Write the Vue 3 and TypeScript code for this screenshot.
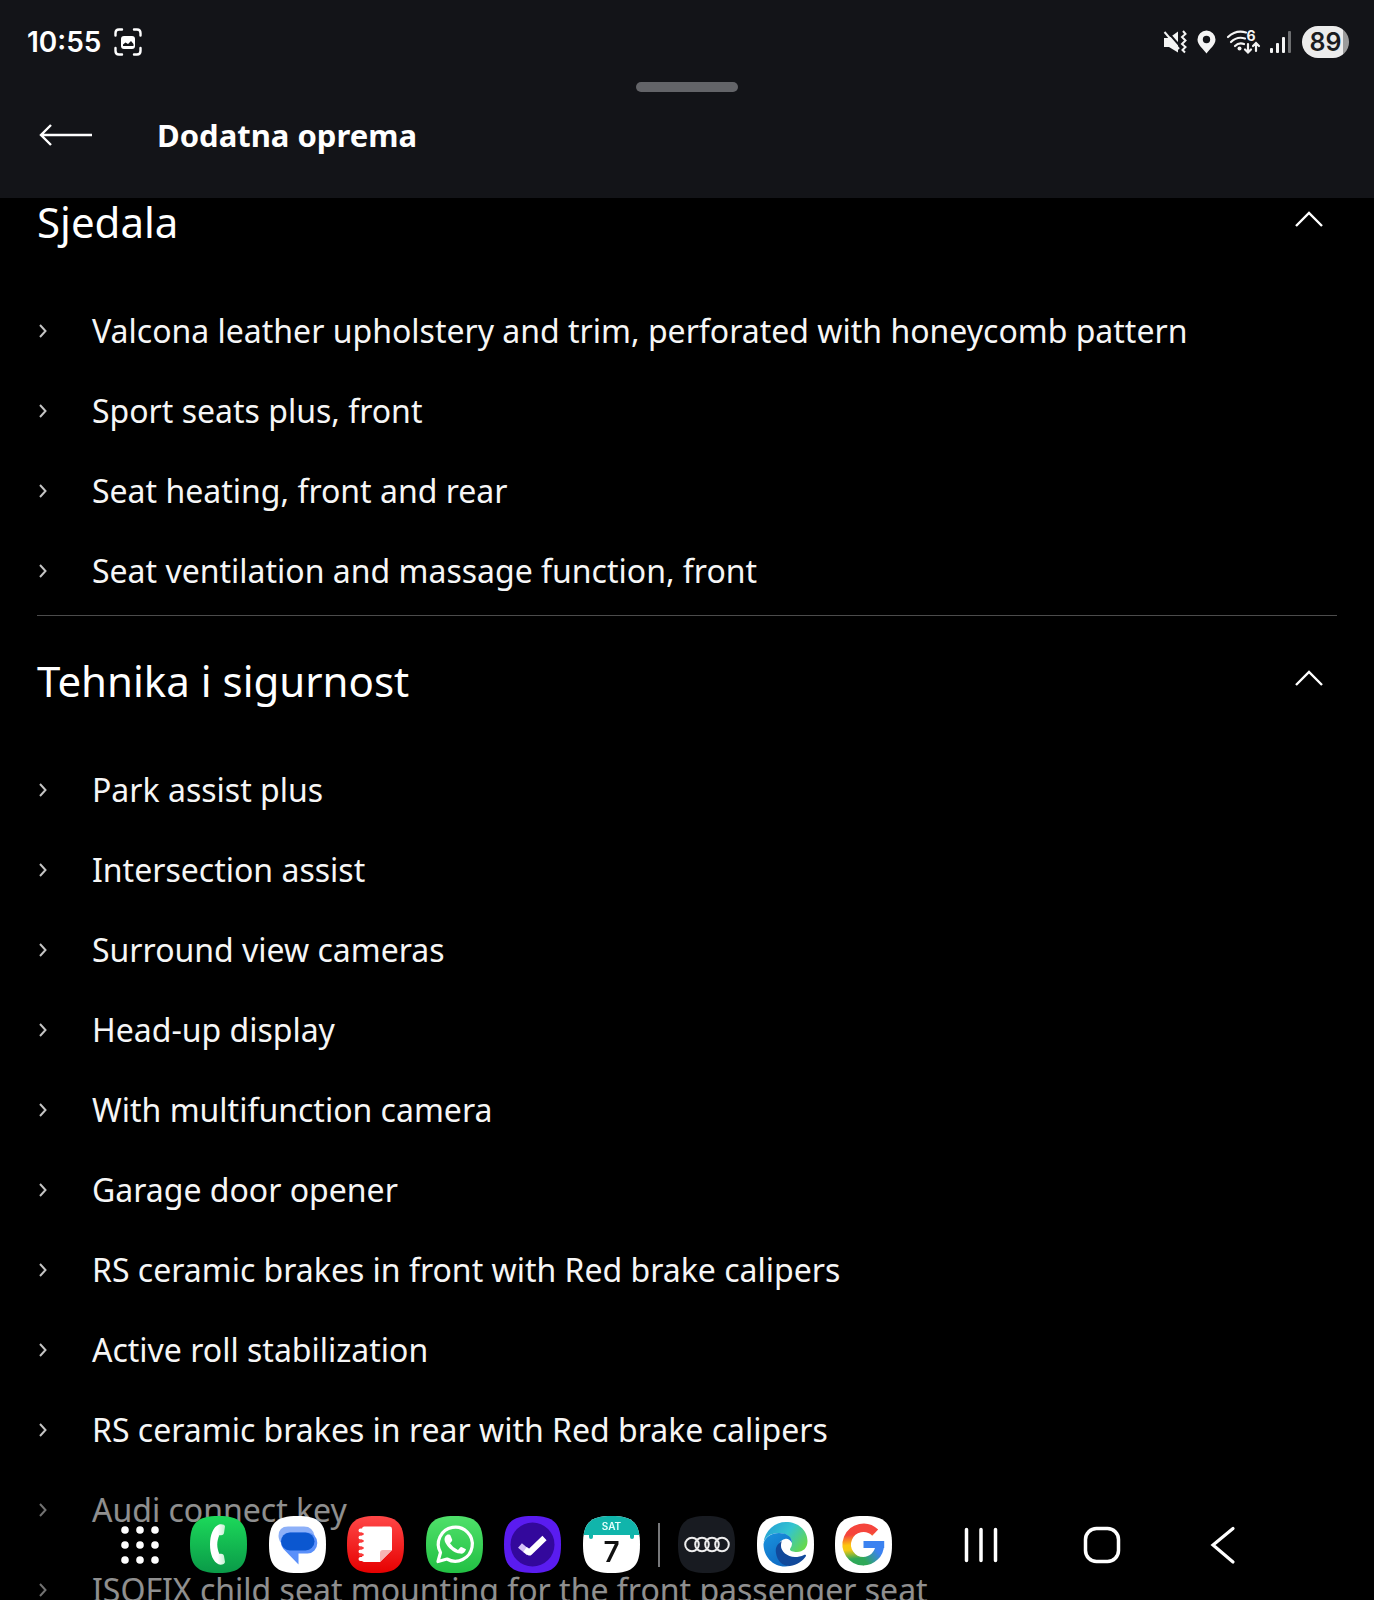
<script setup lang="ts">
import { ref } from 'vue'

interface Section {
  id: string
  title: string
  open: boolean
  items: string[]
}

const sections = ref<Section[]>([
  {
    id: 'sjedala',
    title: 'Sjedala',
    open: true,
    items: [
      'Valcona leather upholstery and trim, perforated with honeycomb pattern',
      'Sport seats plus, front',
      'Seat heating, front and rear',
      'Seat ventilation and massage function, front',
    ],
  },
  {
    id: 'tehnika',
    title: 'Tehnika i sigurnost',
    open: true,
    items: [
      'Park assist plus',
      'Intersection assist',
      'Surround view cameras',
      'Head-up display',
      'With multifunction camera',
      'Garage door opener',
      'RS ceramic brakes in front with Red brake calipers',
      'Active roll stabilization',
      'RS ceramic brakes in rear with Red brake calipers',
      'Audi connect key',
      'ISOFIX child seat mounting for the front passenger seat',
    ],
  },
])

const squircle = 'M28.5 0C50 0 57 7 57 28.5S50 57 28.5 57 0 50 0 28.5 7 0 28.5 0Z'
const dots = [4, 19, 34]
const rings = [14, 24, 34, 44]
</script>

<template>
  <div class="screen">
    <header class="top">
      <div class="status">
        <div class="status-group">
          <span class="clock">10:55</span>
          <svg class="shot" width="28" height="28" viewBox="0 0 28 28" aria-hidden="true">
            <g fill="none" stroke="#fff" stroke-width="2.4" stroke-linecap="round">
              <path d="M1.5 7.500V5Q1.500 1.500 5 1.500H8M20 1.500H23Q26.500 1.500 26.500 5V7.500M26.500 20V23Q26.500 26.500 23 26.500H20M8 26.500H5Q1.500 26.500 1.500 23V20" />
            </g>
            <rect x="7" y="8" width="14" height="13" rx="3" fill="#fff" />
            <path d="M9 18V16.500L11.500 14.500 14 16 17 13 19.500 16V18Z" fill="#131418" />
          </svg>
        </div>
        <div class="status-group icons">
          <svg width="24" height="24" viewBox="0 0 24 24" aria-hidden="true">
            <path d="M1 8H6L15 1.500V22.500L6 17H1Z" fill="#f4f4f4" />
            <path d="M2 -1L17 16" stroke="#131418" stroke-width="2" />
            <path d="M1.500 2L16 19" stroke="#f4f4f4" stroke-width="2" />
            <path d="M20 1L22.500 4 19 7 22.500 10.500 19 14 22.500 17 19.500 20 22 22.500" fill="none" stroke="#f4f4f4" stroke-width="2" />
          </svg>
          <svg width="19" height="24" viewBox="0 0 19 24" aria-hidden="true">
            <path fill-rule="evenodd" fill="#f4f4f4" d="M9.500 0.500A9 9 0 0 1 18.500 9.500C18.500 15 13 18.500 9.500 23.500 6 18.500 0.500 15 0.500 9.500A9 9 0 0 1 9.500 0.500ZM9.500 5.800A3.700 3.700 0 1 0 9.500 13.200 3.700 3.700 0 1 0 9.500 5.800Z" />
          </svg>
          <svg class="wifi" width="34" height="26" viewBox="0 0 34 26" aria-hidden="true">
            <g fill="none" stroke="#f4f4f4" stroke-width="2.200" stroke-linecap="round">
              <path d="M2 8Q10 0.500 20 3.500M5 13Q11 7 19 9.500M9 17Q13 13 18 15" />
              <path d="M22 15V23M19 20.500L22 23.500 25 20.500M30 22V14.500M27 17L30 14 33 17" stroke-width="2.200" />
            </g>
            <circle cx="13.500" cy="19.500" r="2" fill="#f4f4f4" />
            <text x="25" y="12" text-anchor="middle" class="wifi-gen">6</text>
          </svg>
          <svg width="22" height="24" viewBox="0 0 22 24" aria-hidden="true">
            <g fill="#f4f4f4">
              <rect x="0" y="18" width="3" height="5" rx="1" />
              <rect x="6" y="13" width="3" height="10" rx="1" />
              <rect x="12" y="7" width="3" height="16" rx="1" />
              <rect x="18" y="1" width="3" height="22" rx="1" opacity=".4" />
            </g>
          </svg>
          <span class="battery">89</span>
        </div>
      </div>
      <div class="handle"></div>
      <div class="title-row">
        <button class="back" type="button" aria-label="Natrag">
          <svg width="54" height="24" viewBox="0 0 54 24" fill="none" stroke="#fff" stroke-width="2.400" aria-hidden="true">
            <path d="M53 12H2M12 2L2 12 12 22" />
          </svg>
        </button>
        <h1>Dodatna oprema</h1>
      </div>
    </header>

    <main class="content">
      <div class="sections">
        <section v-for="section in sections" :key="section.id" class="section">
          <h2>
            <button
              class="toggle"
              type="button"
              :aria-expanded="section.open"
              :aria-controls="section.id"
              @click="section.open = !section.open"
            >
              <span>{{ section.title }}</span>
              <svg class="caret" :class="{ closed: !section.open }" width="28" height="16" viewBox="0 0 28 16" fill="none" stroke="#fff" stroke-width="2.400" aria-hidden="true">
                <path d="M1 15L14 2 27 15" />
              </svg>
            </button>
          </h2>
          <ul v-show="section.open" :id="section.id">
            <li v-for="item in section.items" :key="item">
              <svg width="10" height="14" viewBox="0 0 10 14" fill="none" stroke="#c4c4c4" stroke-width="2" aria-hidden="true">
                <path d="M2 1L7.500 7 2 13" />
              </svg>
              <span>{{ item }}</span>
            </li>
          </ul>
        </section>
      </div>
    </main>

    <nav class="taskbar">
      <div class="taskbar-inner">
        <button type="button" class="dots" aria-label="Sve aplikacije">
          <svg width="38" height="38" viewBox="0 0 38 38" fill="#fff" aria-hidden="true">
            <template v-for="y in dots" :key="y">
              <circle v-for="x in dots" :key="x" :cx="x" :cy="y" r="3.800" />
            </template>
          </svg>
        </button>

        <div class="apps apps-main">
          <button type="button" aria-label="Telefon">
            <svg class="app" viewBox="0 0 57 57" aria-hidden="true">
              <defs>
                <linearGradient id="phone-bg" x1="0" y1="0" x2="0" y2="1">
                  <stop offset="0" stop-color="#1cd95a" />
                  <stop offset="1" stop-color="#0a9a48" />
                </linearGradient>
                <linearGradient id="phone-fg" x1="0" y1="0" x2="1" y2="0">
                  <stop offset=".5" stop-color="#fff" />
                  <stop offset="1" stop-color="#c5efd2" />
                </linearGradient>
              </defs>
              <path :d="squircle" fill="url(#phone-bg)" />
              <path fill="url(#phone-fg)" d="M29 8.500C32 8 35 8.500 35 10.500L34 17C33.500 19 32 19.500 29.500 19 26.500 25 26.500 32 29.500 38 32 37.500 33.500 38 34 40L35 46C35 48 32 49 29 48.500 23 46 20 38 20 28.500 20 19 23 11 29 8.500Z" />
            </svg>
          </button>
          <button type="button" aria-label="Poruke">
            <svg class="app" viewBox="0 0 57 57" aria-hidden="true">
              <path :d="squircle" fill="#fff" />
              <path d="M19 10.500H35Q44 10.500 45.500 20L14 29Q9.500 25 9.500 20 9.500 10.500 19 10.500Z" fill="#8db0f8" />
              <path d="M21 16.500H38.500A9.800 10.500 0 0 1 38.500 37.500H29.500V48.500L14.500 33Q12 30 12 26 12 16.500 21 16.500Z" fill="#5b90fa" />
              <rect x="12" y="16.500" width="33.500" height="18" rx="9" fill="#0b57d0" />
            </svg>
          </button>
          <button type="button" aria-label="Bilješke">
            <svg class="app" viewBox="0 0 57 57" aria-hidden="true">
              <defs>
                <linearGradient id="notes-bg" x1="0" y1="0" x2="0" y2="1">
                  <stop offset="0" stop-color="#ff4747" />
                  <stop offset="1" stop-color="#e60000" />
                </linearGradient>
              </defs>
              <path :d="squircle" fill="url(#notes-bg)" />
              <path d="M17 10.500H43Q45 10.500 45 13V34L33 46H17Q15 46 15 44V13Q15 10.500 17 10.500Z" fill="#fff" />
              <path d="M13.500 14.500H17M13.500 21.500H17M13.500 28.500H17M13.500 35.500H17M13.500 43H17" stroke="#fff" stroke-width="4" stroke-linecap="round" />
              <path d="M13 18H15.500M13 25H15.500M13 32H15.500M13 39H15.500" stroke="#fb3a3a" stroke-width="2.500" stroke-linecap="round" />
              <path d="M33 46V37Q33 34 36 34H45Z" fill="#f7b4b4" />
            </svg>
          </button>
          <button type="button" aria-label="WhatsApp">
            <svg class="app" viewBox="0 0 57 57" aria-hidden="true">
              <defs>
                <linearGradient id="wa-bg" x1="0" y1="0" x2="0" y2="1">
                  <stop offset="0" stop-color="#4fe06a" />
                  <stop offset="1" stop-color="#22c043" />
                </linearGradient>
              </defs>
              <path :d="squircle" fill="url(#wa-bg)" />
              <path d="M12 45.500L14.500 36.500A17 17 0 1 1 21 43Z" fill="none" stroke="#fff" stroke-width="3.200" stroke-linejoin="round" />
              <path d="M22.500 19.500H24Q25 19.500 25.500 20.500L27.300 25Q27.500 25.800 25 28.300 28 33 33 35L35.500 32.200Q36 31.700 37 32.200L41 34.200Q39.500 39 35.500 38.600 30 38.500 24.500 33.300 19.500 28 19.500 24.500 19.500 21 22.500 19.500Z" transform="translate(-1 -1)" fill="#fff" />
            </svg>
          </button>
          <button type="button" aria-label="Zadaci">
            <svg class="app" viewBox="0 0 57 57" aria-hidden="true">
              <path :d="squircle" fill="#5a1cf0" />
              <circle cx="28.500" cy="28.500" r="22" fill="#33089c" />
              <path d="M16 29.500L25 37" stroke="#d6c2f7" stroke-width="6" />
              <path d="M21 33.500L25.500 36.500 40.500 22" fill="none" stroke="#fff" stroke-width="6" stroke-linejoin="round" />
            </svg>
          </button>
          <button type="button" aria-label="Kalendar">
            <svg class="app" viewBox="0 0 57 57" aria-hidden="true">
              <defs>
                <clipPath id="cal-clip"><path :d="squircle" /></clipPath>
              </defs>
              <g clip-path="url(#cal-clip)">
                <rect width="57" height="57" fill="#fff" />
                <rect width="57" height="19" fill="#10b5ab" />
                <rect x="6" y="16" width="4" height="7" rx="2" fill="#10b5ab" />
                <rect x="47" y="16" width="4" height="7" rx="2" fill="#10b5ab" />
              </g>
              <text x="28.500" y="14" text-anchor="middle" class="cal-day">SAT</text>
              <text x="28.500" y="46" text-anchor="middle" class="cal-date">7</text>
            </svg>
          </button>
        </div>

        <div class="divider"></div>

        <div class="apps apps-recent">
          <button type="button" aria-label="Audi">
            <svg class="app" viewBox="0 0 57 57" aria-hidden="true">
              <path :d="squircle" fill="#181b21" />
              <circle v-for="x in rings" :key="x" :cx="x" cy="28.500" r="6.800" fill="none" stroke="#eee" stroke-width="2" />
            </svg>
          </button>
          <button type="button" aria-label="Edge">
            <svg class="app" viewBox="0 0 57 57" aria-hidden="true">
              <defs>
                <linearGradient id="edge-top" x1="0" y1="0.200" x2="1" y2="0.700">
                  <stop offset="0" stop-color="#249fd6" />
                  <stop offset=".5" stop-color="#33c4d0" />
                  <stop offset="1" stop-color="#66d84c" />
                </linearGradient>
                <linearGradient id="edge-left" x1="0" y1="0" x2="0.600" y2="1">
                  <stop offset="0" stop-color="#1a94de" />
                  <stop offset="1" stop-color="#0f6bc4" />
                </linearGradient>
              </defs>
              <path :d="squircle" fill="#fff" />
              <path fill="url(#edge-top)" d="M6.500 27C8 14 18 6 29 6 41 6 50.500 14 50.500 25 50.500 32 46 36 40 36 36 36 33 35 33 33.500 33 32 35 31 35 27 35 21 29 17 22 17 14 17 8 21 6.500 27Z" />
              <path fill="url(#edge-left)" d="M6.500 28C8 21 14 17 22 17 29 17 35 20 35 27 33 23 30 22.500 28 23 23 24 21 29 21 34 21 42 25 49 33 50 18 53 6.500 42 6.500 28Z" />
              <path fill="#11499b" d="M25 25C20 28 18 32 19 37 20 45 26 50.500 33 50 40 49 46 45 49 40 49.300 39 48 38.500 47 39 44 40.500 41 41 38 41 30 41 24 35 24 30 24 28 24.200 26 25 25Z" />
            </svg>
          </button>
          <button type="button" aria-label="Google">
            <svg class="app" viewBox="0 0 57 57" aria-hidden="true">
              <defs>
                <linearGradient id="g-left" gradientUnits="userSpaceOnUse" x1="24" y1="8" x2="28" y2="48">
                  <stop offset=".25" stop-color="#f5453c" />
                  <stop offset=".5" stop-color="#fcc610" />
                  <stop offset=".62" stop-color="#f5c915" />
                  <stop offset=".85" stop-color="#2fa858" />
                </linearGradient>
                <linearGradient id="g-right" gradientUnits="userSpaceOnUse" x1="28" y1="46" x2="46" y2="32">
                  <stop offset=".1" stop-color="#2fa858" />
                  <stop offset=".8" stop-color="#3b82f0" />
                </linearGradient>
              </defs>
              <path :d="squircle" fill="#fff" />
              <g fill="none" stroke-width="8.500">
                <path d="M40.200 16.600A16.700 16.700 0 1 0 28.500 45.200" stroke="url(#g-left)" />
                <path d="M28 45.200A16.700 16.700 0 0 0 44.800 29" stroke="url(#g-right)" />
              </g>
              <rect x="28.500" y="25" width="20.700" height="7" fill="#3b82f0" />
            </svg>
          </button>
        </div>

        <div class="system">
          <button type="button" aria-label="Nedavno">
            <svg width="40" height="40" viewBox="0 0 40 40" stroke="#fff" stroke-width="3.500" stroke-linecap="round" aria-hidden="true">
              <path d="M5.500 4.500V35.500M20 4.500V35.500M34.500 4.500V35.500" />
            </svg>
          </button>
          <button type="button" aria-label="Početna">
            <svg width="40" height="40" viewBox="0 0 40 40" fill="none" stroke="#fff" stroke-width="3.500" aria-hidden="true">
              <rect x="3.500" y="3.500" width="33" height="33" rx="11" />
            </svg>
          </button>
          <button type="button" aria-label="Natrag">
            <svg width="40" height="40" viewBox="0 0 40 40" fill="none" stroke="#fff" stroke-width="3.200" stroke-linecap="round" aria-hidden="true">
              <path d="M30 3.500L10 20 30 37" />
            </svg>
          </button>
        </div>
      </div>
    </nav>
  </div>
</template>

<style>
body {
  margin: 0;
  background: #000;
}
</style>

<style scoped>
.screen {
  display: flex;
  flex-direction: column;
  height: 100vh;
  overflow: hidden;
  background: #000;
  color: #fff;
  font-family: "Noto Sans", "Open Sans", sans-serif;
}

button {
  display: flex;
  align-items: center;
  justify-content: center;
  padding: 0;
  border: 0;
  background: none;
  color: inherit;
  font: inherit;
  cursor: pointer;
}

h1,
h2,
ul {
  margin: 0;
  padding: 0;
}

svg {
  display: block;
  flex: none;
}

.top {
  position: relative;
  z-index: 1;
  flex: none;
  padding-bottom: 20px;
  background: #131418;
}

.status {
  display: flex;
  align-items: center;
  justify-content: space-between;
  height: 80px;
  padding: 2px 25px 0 27px;
}

.status-group {
  display: flex;
  align-items: center;
  gap: 13px;
}

.icons {
  gap: 10px;
}

.clock {
  font: 600 28px/40px Inter, sans-serif;
}

.wifi {
  overflow: visible;
}

.wifi-gen {
  fill: #f4f4f4;
  font: 700 14px Inter, sans-serif;
}

.battery {
  width: 47px;
  border-radius: 16px;
  background: linear-gradient(90deg, #ececec 88%, #9b9b9b 88%);
  color: #1b1c20;
  font: 600 25px/32px Inter, sans-serif;
  text-align: center;
}

.handle {
  width: 102px;
  height: 10px;
  margin: 0 auto;
  border-radius: 5px;
  background: #636468;
}

.title-row {
  display: flex;
  align-items: center;
  gap: 64px;
  height: 86px;
  padding: 0 39px;
}

h1 {
  font-size: 31px;
  font-weight: 700;
  line-height: 44px;
}

.content {
  flex: 1;
  min-height: 0;
  overflow: hidden;
}

/* Scroll offset: the first heading sits partly beneath the header. */
.sections {
  margin-top: -41px;
  padding: 0 37px;
}

.section {
  padding-bottom: 4px;
  border-bottom: 1px solid #4c4c4c;
}

h2 {
  font-size: 42px;
  font-weight: 400;
  line-height: 56px;
}

.toggle {
  justify-content: space-between;
  width: 100%;
  height: 134px;
  padding: 0 14px 4px 0;
}

.caret {
  margin-bottom: 6px;
}

.caret.closed {
  transform: rotate(180deg);
}

li {
  display: flex;
  align-items: center;
  gap: 44px;
  height: 80px;
  padding-left: 1px;
  color: #f6f6f6;
  font-size: 32px;
  line-height: 44px;
  white-space: nowrap;
}

.taskbar {
  position: fixed;
  right: 0;
  bottom: 0;
  left: 0;
  z-index: 2;
  height: 111px;
  background: rgba(0, 0, 0, 0.42);
}

.taskbar-inner {
  display: flex;
  align-items: center;
  max-width: 1130px;
  height: 100%;
  margin: 0 auto;
  padding-right: 2px;
}

.apps {
  display: flex;
  justify-content: space-between;
}

.apps-main {
  width: 450px;
  margin-left: 31px;
}

.apps-recent {
  width: 214px;
}

.app {
  width: 57px;
  height: 57px;
}

.divider {
  width: 2px;
  height: 44px;
  margin: 0 18px;
  background: #77787a;
}

.system {
  display: flex;
  gap: 64px;
  margin-left: auto;
}

.system button {
  width: 57px;
}

.cal-day {
  fill: #e6fffc;
  font: 600 10px Inter, sans-serif;
}

.cal-date {
  fill: #111;
  font: 600 28px Inter, sans-serif;
}
</style>
